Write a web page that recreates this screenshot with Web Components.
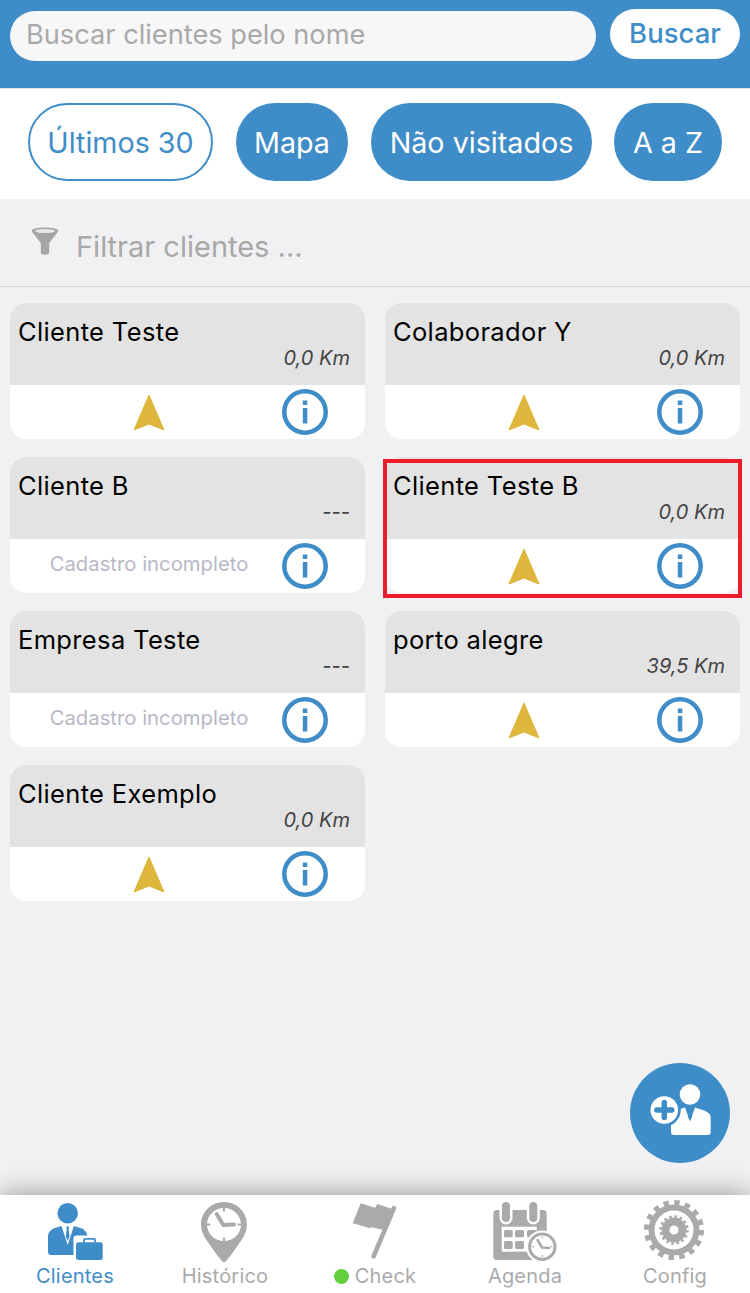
<!DOCTYPE html>
<html lang="pt">
<head>
<meta charset="utf-8">
<title>Clientes</title>
<style>
    html, body { margin: 0; padding: 0; background: #f1f1f4; }
    body { font-family: 'Inter', 'Liberation Sans', sans-serif; }
</style>
</head>
<body>
<client-app>
    <search-header slot="top" placeholder="Buscar clientes pelo nome" action="Buscar"></search-header>
    <chip-bar slot="top">
        <filter-chip outline style="width:185px">Últimos 30</filter-chip>
        <filter-chip style="width:112px">Mapa</filter-chip>
        <filter-chip style="width:221px">Não visitados</filter-chip>
        <filter-chip style="width:108px;margin-left:-1px">A a Z</filter-chip>
    </chip-bar>
    <filter-bar slot="top" placeholder="Filtrar clientes ..."></filter-bar>

    <client-grid>
        <client-card name="Cliente Teste" km="0,0 Km"></client-card>
        <client-card name="Colaborador Y" km="0,0 Km"></client-card>
        <client-card name="Cliente B" km="---" incomplete></client-card>
        <client-card name="Cliente Teste B" km="0,0 Km" highlighted></client-card>
        <client-card name="Empresa Teste" km="---" incomplete></client-card>
        <client-card name="porto alegre" km="39,5 Km"></client-card>
        <client-card name="Cliente Exemplo" km="0,0 Km"></client-card>
    </client-grid>

    <add-client-fab slot="fab"></add-client-fab>

    <tab-bar slot="tabs">
        <tab-item icon="clients" active>Clientes</tab-item>
        <tab-item icon="history">Histórico</tab-item>
        <tab-item icon="flag" dot>Check</tab-item>
        <tab-item icon="agenda">Agenda</tab-item>
        <tab-item icon="config">Config</tab-item>
    </tab-bar>
</client-app>

<script>
// ========================================
// CLIENTES SCREEN - COMPONENTS
// ========================================

const BLUE = '#3f8dc8';

class ClientApp extends HTMLElement {
    constructor() {
        super();
        this.attachShadow({ mode: 'open' });
        this.shadowRoot.innerHTML = `
      <style>
        :host {
          display: flex;
          flex-direction: column;
          position: relative;
          height: 1293px;
          overflow: hidden;
          background: #f1f1f4;
        }
        main { flex: 1; min-height: 0; }
        .fab { position: absolute; right: 20px; bottom: 130px; }
      </style>
      <slot name="top"></slot>
      <main><slot></slot></main>
      <div class="fab"><slot name="fab"></slot></div>
      <slot name="tabs"></slot>
    `;
    }
}

class SearchHeader extends HTMLElement {
    constructor() {
        super();
        this.attachShadow({ mode: 'open' });
    }

    connectedCallback() {
        this.shadowRoot.innerHTML = `
      <style>
        :host {
          display: flex;
          align-items: flex-start;
          gap: 14px;
          height: 89px;
          box-sizing: border-box;
          padding: 9px 10px 0;
          background: ${BLUE};
          border-bottom: 1px solid #e4e4e4;
        }
        .input {
          flex: 1;
          height: 50px;
          margin-top: 2px;
          padding-left: 16px;
          border-radius: 25px;
          background: #f7f7f7;
          color: #a9a9a9;
          font-size: 27.2px;
          line-height: 47px;
        }
        .btn {
          width: 130px;
          height: 50px;
          border-radius: 25px;
          background: #fff;
          color: ${BLUE};
          font-size: 27.5px;
          font-weight: 500;
          line-height: 49px;
          text-align: center;
        }
      </style>
      <div class="input">${this.getAttribute('placeholder')}</div>
      <div class="btn">${this.getAttribute('action')}</div>
    `;
    }
}

class ChipBar extends HTMLElement {
    constructor() {
        super();
        this.attachShadow({ mode: 'open' });
        this.shadowRoot.innerHTML = `
      <style>
        :host {
          display: flex;
          gap: 23px;
          height: 110px;
          box-sizing: border-box;
          padding: 14px 0 0 28px;
          background: #fff;
        }
      </style>
      <slot></slot>
    `;
    }
}

class FilterChip extends HTMLElement {
    constructor() {
        super();
        this.attachShadow({ mode: 'open' });
        this.shadowRoot.innerHTML = `
      <style>
        :host {
          display: block;
          box-sizing: border-box;
          height: 78px;
          border-radius: 39px;
          background: ${BLUE};
          color: #fff;
          font-size: 28.7px;
          line-height: 80px;
          text-align: center;
          white-space: nowrap;
        }
        :host([outline]) {
          line-height: 76px;
          background: #fff;
          color: ${BLUE};
          border: 2px solid ${BLUE};
        }
      </style>
      <slot></slot>
    `;
    }
}

class FilterBar extends HTMLElement {
    constructor() {
        super();
        this.attachShadow({ mode: 'open' });
    }

    connectedCallback() {
        this.shadowRoot.innerHTML = `
      <style>
        :host {
          display: flex;
          align-items: center;
          height: 88px;
          box-sizing: border-box;
          padding-left: 31px;
          border-bottom: 1px solid #d9d9dd;
          color: #a8a8a8;
          font-size: 29px;
        }
        svg { width: 28px; height: 28px; margin: -3px 18px 0 0; flex: none; }
        span { padding-top: 8px; margin-left: -1px; }
      </style>
      <svg viewBox="0 0 28 28">
        <path fill="#a5a5a5" d="M1 3.5C1 1.5 7 .5 14 .5s13 1 13 3c0 1-.5 2-1.500 3.200L18.200 16v9.500c0 3-8.400 3-8.400 0V16L2.500 6.700C1.500 5.500 1 4.500 1 3.500z"/>
        <ellipse cx="14" cy="4" rx="10" ry="2" fill="#e6e6e8"/>
      </svg>
      <span>${this.getAttribute('placeholder')}</span>
    `;
    }
}

class ClientGrid extends HTMLElement {
    constructor() {
        super();
        this.attachShadow({ mode: 'open' });
        this.shadowRoot.innerHTML = `
      <style>
        :host {
          display: grid;
          grid-template-columns: 355px 355px;
          column-gap: 20px;
          row-gap: 18px;
          padding: 16px 10px 0;
        }
      </style>
      <slot></slot>
    `;
    }
}

class ClientCard extends HTMLElement {
    constructor() {
        super();
        this.attachShadow({ mode: 'open' });
    }

    connectedCallback() {
        const incomplete = this.hasAttribute('incomplete');
        const action = incomplete
            ? '<span class="missing">Cadastro incompleto</span>'
            : `<svg class="nav" viewBox="0 0 32 37"><path fill="#deb63c" stroke="#deb63c" stroke-width="1" stroke-linejoin="round" d="M16 1 31 36 16 30 1 36z"/></svg>`;

        this.shadowRoot.innerHTML = `
      <style>
        :host {
          display: block;
          position: relative;
          height: 136px;
          border-radius: 16px;
          background: #fff;
        }
        .head {
          height: 82px;
          box-sizing: border-box;
          padding: 14px 15px 0 8px;
          border-radius: 16px 16px 0 0;
          background: #e3e3e3;
        }
        .name {
          color: #000;
          font-size: 25.5px;
          letter-spacing: 0.35px;
          line-height: 30px;
        }
        .km {
          color: #444;
          font-size: 20px;
          font-style: italic;
          line-height: 22px;
          text-align: right;
        }
        .foot {
          display: flex;
          align-items: center;
          height: 54px;
          padding: 0 37px 0 6px;
        }
        .action {
          flex: 1;
          display: flex;
          justify-content: center;
        }
        .nav { width: 32px; height: 37px; display: block; }
        .missing { color: #b8b8c6; font-size: 20.3px; margin-top: -6px; }
        .info { width: 46px; height: 46px; flex: none; display: block; }
        :host([highlighted]) .mark {
          position: absolute;
          top: 2px;
          left: -2px;
          right: -2px;
          bottom: -5px;
          border: 4px solid #ed1c2a;
        }
      </style>
      <div class="head">
        <div class="name">${this.getAttribute('name')}</div>
        <div class="km">${this.getAttribute('km')}</div>
      </div>
      <div class="foot">
        <div class="action">${action}</div>
        <svg class="info" viewBox="0 0 46 46">
          <circle cx="23" cy="23" r="20.7" fill="none" stroke="${BLUE}" stroke-width="4.5"/>
          <rect x="20.8" y="11.5" width="4.5" height="4.5" fill="${BLUE}"/>
          <rect x="20.8" y="19" width="4.5" height="15.5" fill="${BLUE}"/>
        </svg>
      </div>
      <div class="mark"></div>
    `;
    }
}

class AddClientFab extends HTMLElement {
    constructor() {
        super();
        this.attachShadow({ mode: 'open' });
        this.shadowRoot.innerHTML = `
      <style>
        :host {
          display: block;
          width: 100px;
          height: 100px;
          border-radius: 50%;
          background: ${BLUE};
        }
        svg { display: block; width: 100px; height: 100px; }
      </style>
      <svg viewBox="0 0 100 100">
        <circle cx="60" cy="31.5" r="10.3" fill="#fff"/>
        <path fill="#fff" d="M41 69V54c0-4 3-6 8-7.5l6-2 5 14 5-14 6 2c5 1.5 9.7 3.5 9.7 8V69c0 2-1 3-3 3H44c-2 0-3-1-3-3z"/>
        <path fill="${BLUE}" d="M58.4 45h3.2l-.7 2.5 1.3 6.5-2.2 3.5-2.2-3.5 1.3-6.5z"/>
        <circle cx="34.3" cy="47" r="16.5" fill="${BLUE}"/>
        <circle cx="34.3" cy="47" r="13.8" fill="#fff"/>
        <path stroke="${BLUE}" stroke-width="5.5" stroke-linecap="round" d="M34.3 39.5v15M26.8 47h15"/>
      </svg>
    `;
    }
}

class TabBar extends HTMLElement {
    constructor() {
        super();
        this.attachShadow({ mode: 'open' });
        this.shadowRoot.innerHTML = `
      <style>
        :host {
          display: grid;
          grid-template-columns: repeat(5, 1fr);
          height: 98px;
          background: #fff;
          box-shadow: 0 0 26px rgba(0,0,0,0.4);
          position: relative;
        }
      </style>
      <slot></slot>
    `;
    }
}

const TAB_ICONS = {
    clients: `
        <circle cx="27.7" cy="18.3" r="10.3"/>
        <path d="M8 57V42c0-5 3-7.5 7-9l6.5-2 6.2 19 6.2-19 6.5 2c4 1.500 7 4 7 9v18H11c-2 0-3-1-3-3z"/>
        <path d="M26.2 31.5h3l-.6 2.5 1.1 7-2 5-2-5 1.1-7z"/>
        <rect x="33.5" y="40.5" width="32" height="27" rx="3" fill="#fff"/>
        <path fill="none" stroke="currentColor" stroke-width="1.8" d="M44 47.5v-2.7c0-.7.5-1 1-1h9c.5 0 1 .3 1 1v2.7"/>
        <rect x="36" y="47.3" width="26.7" height="17.7" rx="2.5"/>`,
    history: `
        <path fill-rule="evenodd" d="M34 7c12.7 0 23 10 23 22.5 0 9-5.5 15.5-10 22-3.5 5-7 10-11 14.8-1 1.1-3 1.1-4 0-4-4.800-7.5-9.800-11-14.800C16.5 45 11 38.5 11 29.5 11 17 21.3 7 34 7zm0 6c-9.4 0-17 7.500-17 16.500S24.600 46 34 46s17-7.500 17-16.500S43.400 13 34 13z"/>
        <path fill="none" stroke="currentColor" stroke-width="4" stroke-linecap="round" stroke-linejoin="round" d="M26.7 19 33.3 30 44 29.5"/>
        <path fill="none" stroke="currentColor" stroke-width="2" d="M34 13v3.5M34 42.5V46M17 29.5h3.5M47.5 29.5H51"/>`,
    flag: `
        <path d="M20.7 8.3 35 12.7 37.3 9 51.5 13.8 43.5 35 30.5 32 31 33.5 12.7 28.3z"/>
        <path fill="none" stroke="currentColor" stroke-width="4.5" stroke-linecap="round" d="M54 13 33.5 61.5"/>`,
    agenda: `
        <rect x="3.3" y="15" width="53.4" height="50" rx="3.5"/>
        <rect x="11.7" y="31.7" width="35" height="25" fill="#fff"/>
        <rect x="14" y="35" width="8.7" height="7.3" rx="1.5"/>
        <rect x="25" y="35" width="9" height="7.3" rx="1.5"/>
        <rect x="37" y="35" width="9.7" height="7.3" rx="1.5"/>
        <rect x="14" y="46" width="8.7" height="8" rx="1.5"/>
        <rect x="25" y="46" width="9" height="8" rx="1.5"/>
        <g fill="none" stroke-linecap="round">
            <path stroke="#fff" stroke-width="13" d="M16 11v12M43.3 11v12"/>
            <path stroke="currentColor" stroke-width="8" d="M16 11v12M43.3 11v12"/>
        </g>
        <circle cx="52.3" cy="51.7" r="16.3" fill="#fff"/>
        <circle cx="52.3" cy="51.7" r="12.7" fill="#fff" stroke="currentColor" stroke-width="3"/>
        <path fill="none" stroke="currentColor" stroke-width="2.5" stroke-linecap="round" stroke-linejoin="round" d="M47.5 45 52 52.5 59 53"/>
        <path fill="none" stroke="currentColor" stroke-width="1.2" d="M52.3 41.5v2M52.3 60v2M42 51.7h2M60.5 51.7h2"/>`,
    config: `
        <circle cx="34" cy="35" r="22.5" fill="none" stroke="currentColor" stroke-width="6"/>
        <circle cx="34" cy="35" r="27.5" fill="none" stroke="currentColor" stroke-width="5" stroke-dasharray="5.4 5.4"/>
        <circle cx="34" cy="35" r="8.5" fill="none" stroke="currentColor" stroke-width="8"/>
        <circle cx="34" cy="35" r="13.5" fill="none" stroke="currentColor" stroke-width="2.5" stroke-dasharray="2.65 2.65"/>`
};

class TabItem extends HTMLElement {
    constructor() {
        super();
        this.attachShadow({ mode: 'open' });
    }

    connectedCallback() {
        const icon = TAB_ICONS[this.getAttribute('icon')] || '';
        this.shadowRoot.innerHTML = `
      <style>
        :host {
          display: flex;
          flex-direction: column;
          align-items: center;
          color: #aaa;
        }
        :host([active]) { color: ${BLUE}; }
        svg { display: block; width: 70px; height: 70px; fill: currentColor; }
        .label {
          display: flex;
          align-items: center;
          gap: 6px;
          font-size: 20px;
          line-height: 23px;
          letter-spacing: 0.2px;
        }
        .dot {
          width: 15px;
          height: 15px;
          border-radius: 50%;
          background: #62cf3c;
          display: none;
        }
        :host([dot]) .dot { display: block; }
      </style>
      <svg viewBox="0 0 70 70">${icon}</svg>
      <div class="label"><span class="dot"></span><slot></slot></div>
    `;
    }
}

customElements.define('client-app', ClientApp);
customElements.define('search-header', SearchHeader);
customElements.define('chip-bar', ChipBar);
customElements.define('filter-chip', FilterChip);
customElements.define('filter-bar', FilterBar);
customElements.define('client-grid', ClientGrid);
customElements.define('client-card', ClientCard);
customElements.define('add-client-fab', AddClientFab);
customElements.define('tab-bar', TabBar);
customElements.define('tab-item', TabItem);
</script>
</body>
</html>
